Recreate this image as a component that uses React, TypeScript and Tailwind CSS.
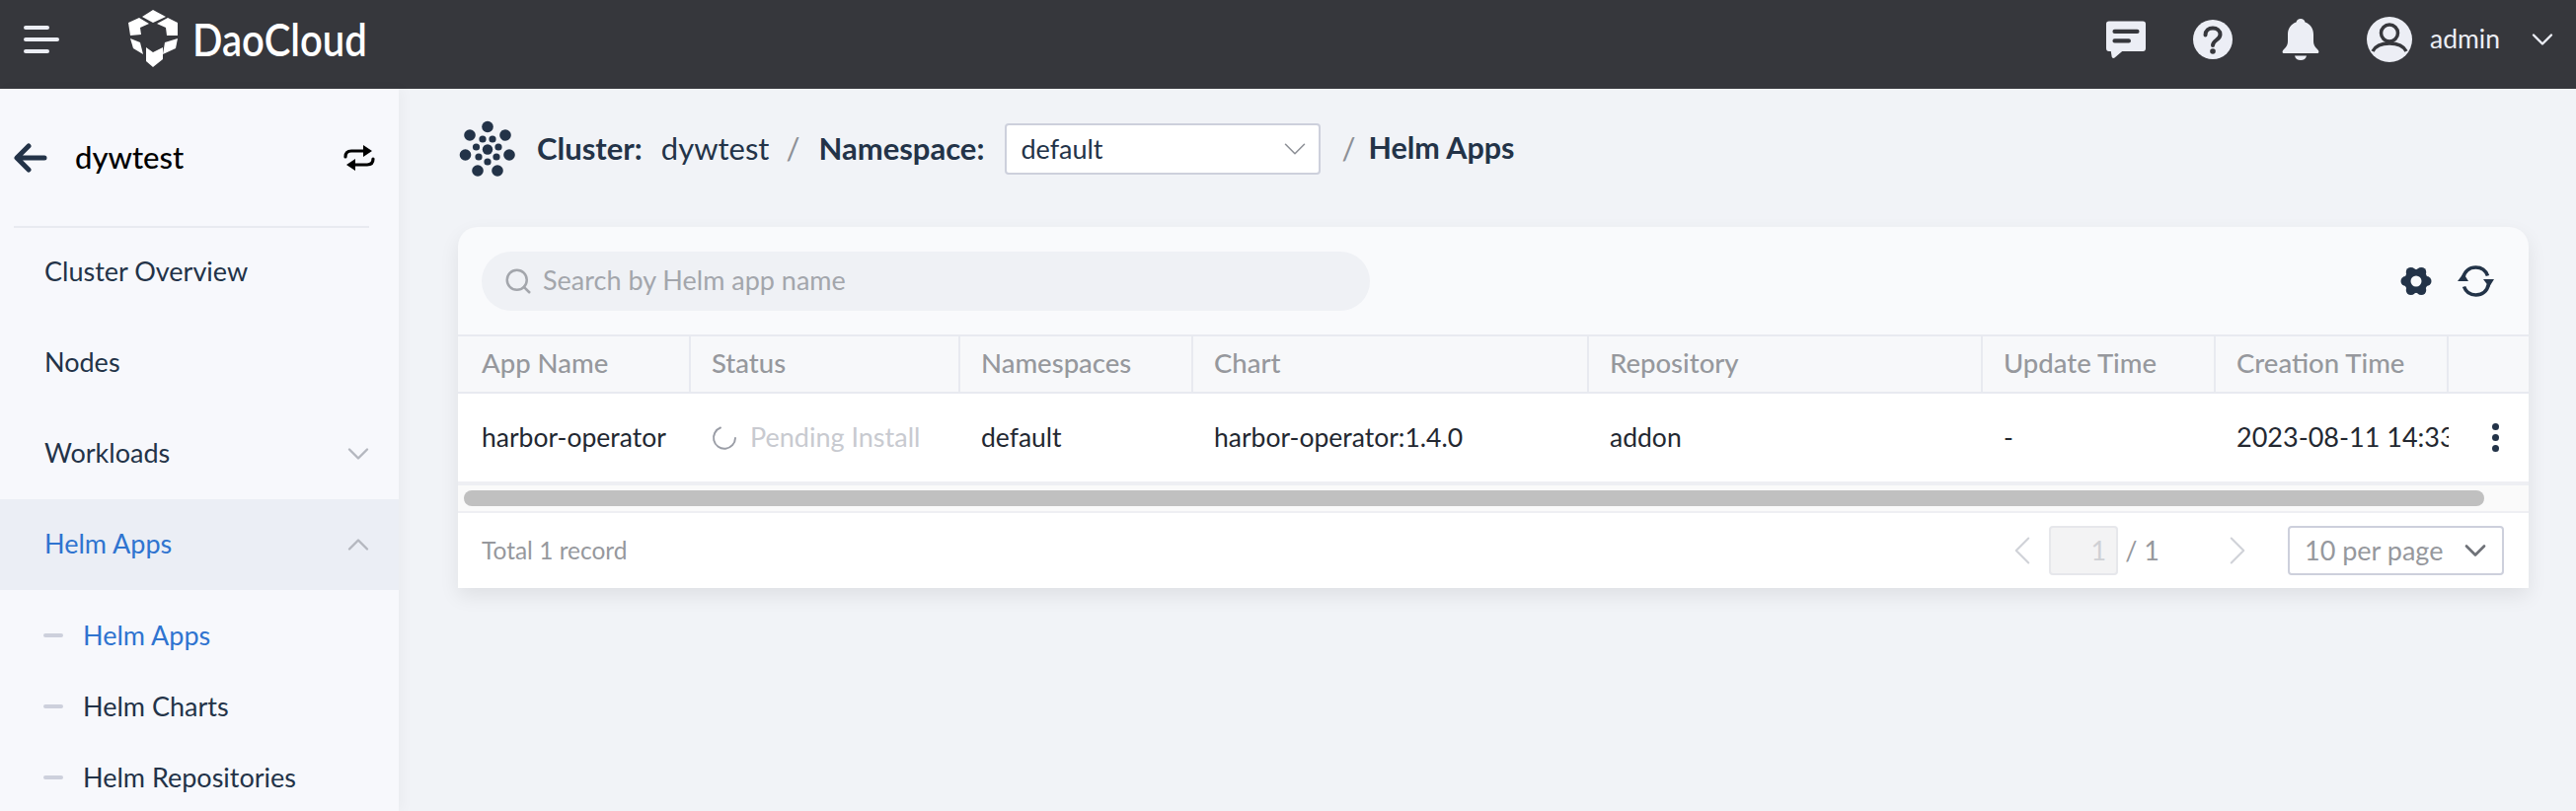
import { ChevronDown, ChevronLeft, ChevronRight, ChevronUp, Search } from "lucide-react"

const font = "font-['Lato','Noto_Sans',sans-serif]"

const columns = [
  { name: "App Name", width: "w-[236px]" },
  { name: "Status", width: "w-[273px]" },
  { name: "Namespaces", width: "w-[236px]" },
  { name: "Chart", width: "w-[401px]" },
  { name: "Repository", width: "w-[399px]" },
  { name: "Update Time", width: "w-[236px]" },
  { name: "Creation Time", width: "w-[236px]" },
  { name: "", width: "w-[81px]" },
]

const gearLobes = [[26.5, 16], [21.25, 6.9], [10.75, 6.9], [5.5, 16], [10.75, 25.1], [21.25, 25.1]]

function Logo() {
  return (
    <svg width="80" height="70" viewBox="0 0 80 70" fill="white" aria-hidden="true">
      <polygon points="35,5 48,12 35,18 24,12" />
      <polygon points="10,18 21,13 31,19 22,23 23,30 12,31" />
      <polygon points="50,13 60,18 60,31 49,31 48,23 39,19" />
      <polygon points="12,34 22,38 25,50 15,44" />
      <polygon points="60,34 58,44 45,50 47,38" />
      <polygon points="28,43 35,48 45,43 45,55 35,63 28,57" />
    </svg>
  )
}

function ClusterIcon() {
  const big = [[34, 12.5], [16, 21], [52, 21], [11.5, 41], [56, 41], [24, 57], [44, 57]]
  const small = [[29, 25], [39, 25], [22.5, 33], [45, 33], [25, 43], [43, 43], [34, 48]]
  return (
    <svg width="70" height="70" viewBox="0 0 70 70" fill="#233348" aria-hidden="true">
      {big.map(([x, y]) => (
        <circle key={`${x}-${y}`} cx={x} cy={y} r="5.8" />
      ))}
      {small.map(([x, y]) => (
        <circle key={`${x}-${y}`} cx={x} cy={y} r="3.6" />
      ))}
      <circle cx="34" cy="35.5" r="5.2" />
    </svg>
  )
}

function ChatIcon() {
  return (
    <svg width="40" height="39" viewBox="0 0 42 40" aria-hidden="true">
      <path d="M3 0h36a3 3 0 0 1 3 3v26a3 3 0 0 1-3 3H17l-8 7q-2 1-3-1l-1-6H3a3 3 0 0 1-3-3V3a3 3 0 0 1 3-3z" fill="#eceef5" />
      <path d="M9 11h24M9 21h15" stroke="#36373c" strokeWidth="4.5" strokeLinecap="round" />
    </svg>
  )
}

function HelpIcon() {
  return (
    <svg width="40" height="40" viewBox="0 0 40 40" aria-hidden="true">
      <circle cx="20" cy="20" r="20" fill="#eceef5" />
      <path d="M12.5 15.5c0-4.5 3.4-7 7.500-7s7.500 2.500 7.500 6.500c0 5.500-7.500 5.500-7.500 11" fill="none" stroke="#36373c" strokeWidth="4" strokeLinecap="round" />
      <circle cx="20" cy="32" r="2.800" fill="#36373c" />
    </svg>
  )
}

function BellIcon() {
  return (
    <svg width="38" height="42" viewBox="0 0 38 42" fill="#eceef5" aria-hidden="true">
      <path d="M19 0c2.500 0 4 1.500 4.500 3.500C29 5.500 32 10 32 16v7c0 3 1 5 4 8 2 2 2 4-.5 4h-33C0 35 0 33 2 31c3-3 4-5 4-8v-7C6 10 9 5.500 14.500 3.500 15 1.500 16.500 0 19 0z" />
      <path d="M13 37.500h12c-.5 3-3 4.500-6 4.500s-5.500-1.500-6-4.500z" />
    </svg>
  )
}

function UserIcon() {
  return (
    <svg width="46" height="46" viewBox="0 0 46 46" aria-hidden="true">
      <circle cx="23" cy="23" r="23" fill="#eceef5" />
      <circle cx="23" cy="16.500" r="8.500" fill="none" stroke="#36373c" strokeWidth="3.500" />
      <path d="M6 35c3-6 9-8 17-8s14 2 17 8" fill="none" stroke="#36373c" strokeWidth="3.500" />
    </svg>
  )
}

function BackIcon() {
  return (
    <svg width="34" height="30" viewBox="0 0 34 30" fill="none" stroke="#233348" strokeWidth="5" strokeLinecap="round" strokeLinejoin="round" aria-hidden="true">
      <path d="M31 15H4M15 3 3 15l12 12" />
    </svg>
  )
}

function SwapIcon() {
  return (
    <svg width="32" height="28" viewBox="0 0 32 28" aria-hidden="true">
      <path d="M2 13c0-4 2-6 6-6h16M30 15c0 4-2 6-6 6H8" fill="none" stroke="#000" strokeWidth="3.200" strokeLinecap="round" />
      <path d="M20 1l9 6-9 6zM12 15l-9 6 9 6z" fill="#000" />
    </svg>
  )
}

function GearIcon() {
  return (
    <svg width="32" height="32" viewBox="0 0 32 32" fill="#233348" aria-hidden="true">
      {gearLobes.map(([x, y]) => (
        <circle key={`${x}-${y}`} cx={x} cy={y} r="5" />
      ))}
      <circle cx="16" cy="16" r="12" />
      <circle cx="16" cy="16" r="5.500" fill="#f9fafc" />
    </svg>
  )
}

function RefreshIcon() {
  return (
    <svg width="37" height="32" viewBox="0 0 37 32" aria-hidden="true">
      <path d="M5.500 13C7 6 12 2 18.500 2c5.500 0 10 3 12 8.500M31.500 19c-1.500 7-6.500 11-13 11-5.500 0-10-3-12-8.500" fill="none" stroke="#233348" strokeWidth="3.600" />
      <path d="M0 16l6-8 5 8zM26 14h11l-5 8z" fill="#233348" />
    </svg>
  )
}

function Spinner() {
  return (
    <svg width="26" height="26" viewBox="0 0 26 26" fill="none" aria-hidden="true">
      <path d="M9 2.500A11 11 0 1 0 24 13" stroke="#9a9da6" strokeWidth="2" strokeLinecap="round" />
    </svg>
  )
}

function SidebarItem({ label, state, height }: { label: string; state?: "open" | "closed"; height: string }) {
  const isOpen = state === "open"
  return (
    <div className={`flex ${height} items-center justify-between pl-[45px] pr-[23px] ${isOpen ? "bg-[#ebeef5]" : ""}`}>
      <span className={`pb-[2px] text-[27px] ${isOpen ? "text-[#2f74d0]" : "text-[#233348]"}`}>{label}</span>
      {state === "closed" && <ChevronDown className="h-[36px] w-[36px] text-[#b4b7bf]" strokeWidth={1.6} />}
      {isOpen && <ChevronUp className="h-[36px] w-[36px] text-[#b4b7bf]" strokeWidth={1.6} />}
    </div>
  )
}

function SubItem({ label, active }: { label: string; active?: boolean }) {
  return (
    <div className="flex h-[72px] items-center pl-[44px]">
      <span className="mr-[20px] h-[4px] w-[20px] rounded-full bg-[#cdd0dc]" />
      <span className={`text-[27px] ${active ? "text-[#2f74d0]" : "text-[#233348]"}`}>{label}</span>
    </div>
  )
}

function Sidebar() {
  return (
    <aside className="z-10 h-full w-[404px] shrink-0 overflow-hidden bg-[#f7f8fc] shadow-[4px_0_12px_rgba(0,0,0,0.03)]">
      <div className="flex h-[139px] items-center justify-between pl-[14px] pr-[24px]">
        <div className="flex items-center gap-[28px]">
          <BackIcon />
          <span className="text-[31px] font-medium text-black">dywtest</span>
        </div>
        <SwapIcon />
      </div>
      <div className="ml-[14px] h-[2px] w-[360px] bg-[#e8eaf0]" />
      <SidebarItem label="Cluster Overview" height="h-[91px]" />
      <SidebarItem label="Nodes" height="h-[92px]" />
      <SidebarItem label="Workloads" state="closed" height="h-[92px]" />
      <SidebarItem label="Helm Apps" state="open" height="h-[92px]" />
      <div className="pt-[10px]">
        <SubItem label="Helm Apps" active />
        <SubItem label="Helm Charts" />
        <SubItem label="Helm Repositories" />
      </div>
    </aside>
  )
}

function Breadcrumb() {
  return (
    <div className="flex h-[52px] items-center text-[31px] text-[#233348]">
      <div className="-ml-[4px]">
        <ClusterIcon />
      </div>
      <span className="ml-[14px] pb-[2px] font-bold">Cluster:</span>
      <span className="ml-[19px] pb-[2px]">dywtest</span>
      <span className="ml-[17px] pb-[2px] text-[#8d9096]">/</span>
      <span className="ml-[19px] pb-[2px] font-bold">Namespace:</span>
      <div className="ml-[21px] flex h-[52px] w-[320px] items-center justify-between rounded-[4px] border-2 border-[#cdd0dc] bg-white pl-[14px] pr-[5px] text-[27px]">
        <span>default</span>
        <ChevronDown className="h-[38px] w-[38px] text-[#8d9096]" strokeWidth={1} />
      </div>
      <span className="ml-[21px] pb-[2px] text-[#8d9096]">/</span>
      <span className="ml-[13px] pb-[2px] text-[30.5px] font-bold">Helm Apps</span>
    </div>
  )
}

function Table() {
  return (
    <>
      <div className="flex h-[60px] border-y-2 border-[#e8eaf0] bg-[#f7f8fa]">
        {columns.map((col) => (
          <div key={col.name} className={`${col.width} flex shrink-0 items-center border-r-2 border-[#e8eaf0] pb-[2px] pl-[21px] text-[27.5px] font-medium text-[#96989d] last:border-r-0 first:pl-[24px]`}>
            {col.name}
          </div>
        ))}
      </div>
      <div className="flex h-[89px] items-center bg-white text-[26.5px] text-[#232831]">
        <div className="w-[236px] shrink-0 whitespace-nowrap pl-[24px]">harbor-operator</div>
        <div className="flex w-[273px] shrink-0 items-center gap-[13px] pl-[21px] text-[27px] text-[#c8cad0]">
          <Spinner />
          Pending Install
        </div>
        <div className="w-[236px] shrink-0 pl-[21px]">default</div>
        <div className="w-[401px] shrink-0 pl-[21px]">harbor-operator:1.4.0</div>
        <div className="w-[399px] shrink-0 pl-[21px]">addon</div>
        <div className="w-[236px] shrink-0 pl-[21px]">-</div>
        <div className="w-[236px] shrink-0 overflow-hidden whitespace-nowrap pl-[21px] text-[27px]">2023-08-11 14:33:02</div>
        <div className="flex w-[81px] shrink-0 flex-col items-center gap-[4px] pl-[14px]">
          <span className="h-[7px] w-[7px] rounded-full bg-[#233348]" />
          <span className="h-[7px] w-[7px] rounded-full bg-[#233348]" />
          <span className="h-[7px] w-[7px] rounded-full bg-[#233348]" />
        </div>
      </div>
      <div className="flex h-[32px] items-center border-t-4 border-b-2 border-[#eeeff3] bg-[#fafafa] pl-[6px]">
        <div className="h-[16px] w-[2047px] rounded-full bg-[#c0c0c0]" />
      </div>
    </>
  )
}

function Pagination() {
  return (
    <div className="flex h-[76px] items-center justify-between bg-white pl-[24px] pr-[25px]">
      <span className="text-[24.5px] text-[#96989d]">Total 1 record</span>
      <div className="flex items-center text-[27px] text-[#96989d]">
        <ChevronLeft className="h-[50px] w-[50px] text-[#d0d2d8]" strokeWidth={1} />
        <div className="ml-[2px] flex h-[50px] w-[70px] items-center justify-end rounded-[4px] border-2 border-[#e6e7eb] bg-[#f3f3f4] pr-[10px] text-[#cfd0d4]">1</div>
        <span className="ml-[7px]">/ 1</span>
        <ChevronRight className="ml-[54px] h-[50px] w-[50px] text-[#d0d2d8]" strokeWidth={1} />
        <div className="ml-[26px] flex h-[50px] w-[219px] items-center justify-between rounded-[4px] border-2 border-[#cdd0dc] pl-[15px] pr-[9px]">
          <span>10 per page</span>
          <ChevronDown className="h-[36px] w-[36px] text-[#6f7278]" strokeWidth={1.8} />
        </div>
      </div>
    </div>
  )
}

export default function App() {
  return (
    <div className={`flex h-[822px] w-[2610px] flex-col overflow-hidden bg-[#f1f3f7] ${font}`}>
      <header className="flex h-[90px] shrink-0 items-center bg-[#36373c] pb-[10px] pl-[24px] pr-[16px]">
        <div className="flex w-[36px] flex-col items-start gap-[8px]">
          <span className="h-[4px] w-[26px] rounded-full bg-[#eceef5]" />
          <span className="h-[4px] w-[36px] rounded-full bg-[#eceef5]" />
          <span className="h-[4px] w-[26px] rounded-full bg-[#eceef5]" />
        </div>
        <div className="ml-[60px] flex items-center">
          <Logo />
          <span className="-ml-[5px] origin-left scale-x-[0.87] text-[46px] font-semibold leading-none text-white">DaoCloud</span>
        </div>
        <div className="ml-auto flex items-center">
          <ChatIcon />
          <div className="ml-[48px]">
            <HelpIcon />
          </div>
          <div className="ml-[50px]">
            <BellIcon />
          </div>
          <div className="ml-[48px]">
            <UserIcon />
          </div>
          <span className="ml-[18px] text-[26.5px] text-[#eceef5]">admin</span>
          <ChevronDown className="ml-[25px] h-[36px] w-[36px] text-[#eceef5]" strokeWidth={1.6} />
        </div>
      </header>
      <div className="flex min-h-0 flex-1">
        <Sidebar />
        <main className="min-w-0 flex-1 pl-[60px] pr-[48px] pt-[35px]">
          <Breadcrumb />
          <section className="mt-[53px] overflow-hidden rounded-t-[20px] bg-[#f9fafc] shadow-[0_8px_20px_rgba(0,0,0,0.08)]">
            <div className="flex h-[109px] items-center justify-between pl-[24px] pr-[35px]">
              <div className="flex h-[60px] w-[900px] items-center rounded-full bg-[#eff1f5] pl-[22px] text-[27px] text-[#a3a6ac]">
                <Search className="mr-[10px] h-[30px] w-[30px]" strokeWidth={2} />
                Search by Helm app name
              </div>
              <div className="flex items-center gap-[26px]">
                <GearIcon />
                <RefreshIcon />
              </div>
            </div>
            <Table />
            <Pagination />
          </section>
        </main>
      </div>
    </div>
  )
}
